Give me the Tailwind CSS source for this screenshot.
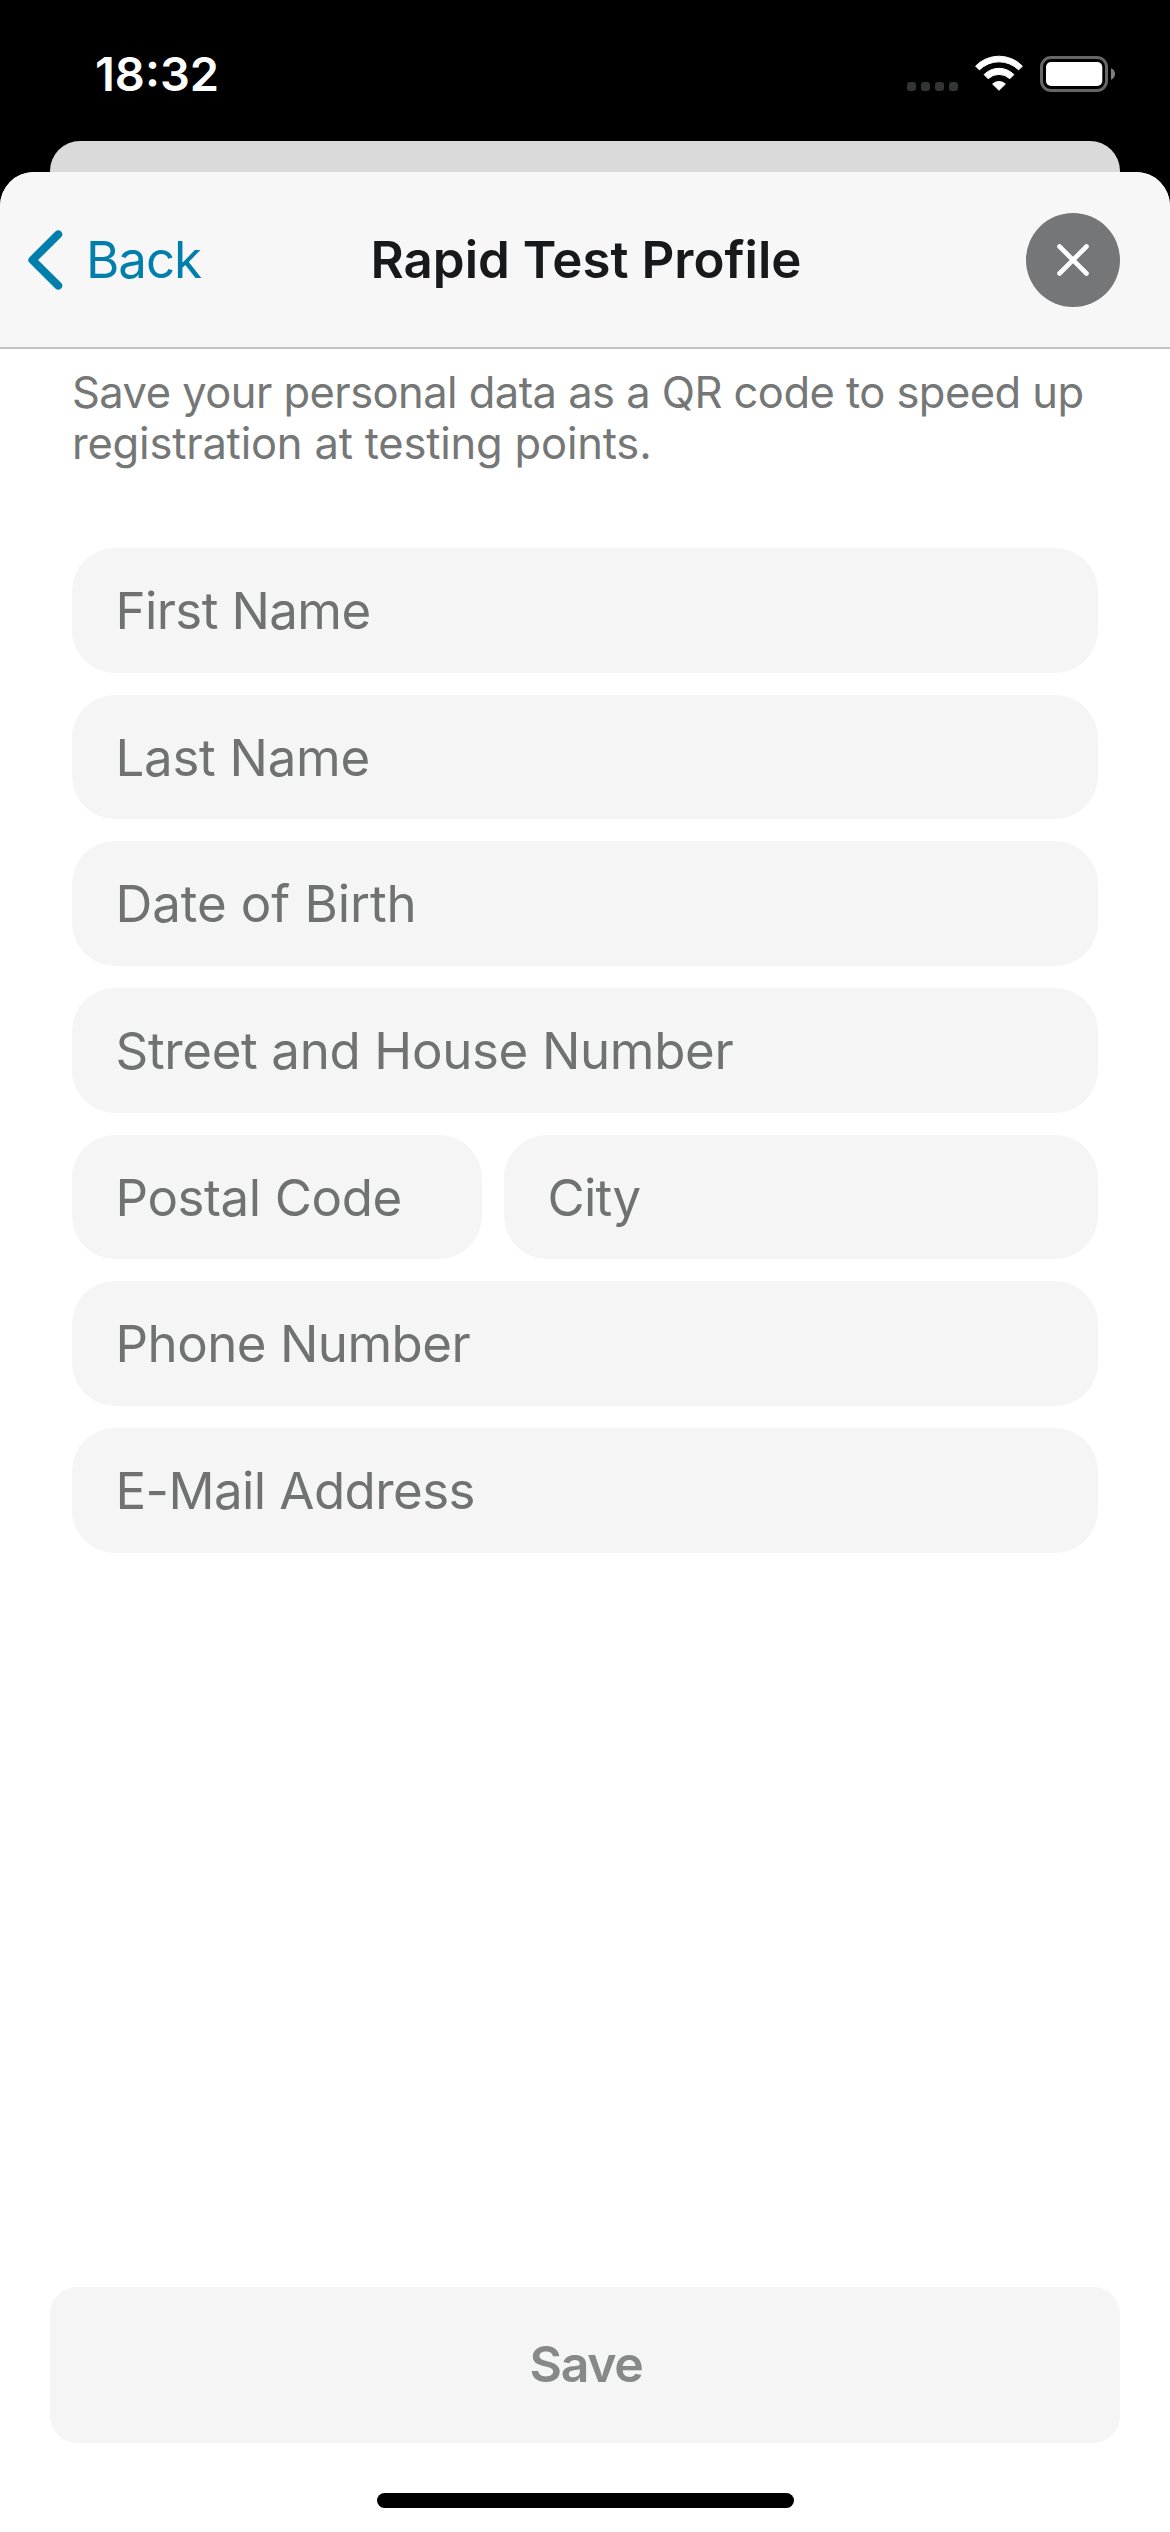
<!DOCTYPE html>
<html lang="en">
<head>
<meta charset="utf-8">
<title>Rapid Test Profile</title>
<script src="https://cdn.jsdelivr.net/npm/@tailwindcss/browser@4"></script>
</head>
<body class="bg-black font-['Inter',sans-serif]">
<div class="flex h-[2532px] w-[1170px] flex-col overflow-hidden bg-black">

  <!-- Status bar -->
  <div class="flex h-[141px] shrink-0 items-start justify-between pt-[44px] pr-[54px] pl-[95px] text-white">
    <span class="text-[47px] leading-[60px] font-semibold">18:32</span>
    <svg class="mt-2 h-[44px] w-[212px]" viewBox="904 52 212 44" fill="none">
      <g fill="#333434">
        <rect x="907" y="82" width="9" height="9" rx="3"/>
        <rect x="921" y="82" width="9" height="9" rx="3"/>
        <rect x="935" y="82" width="9" height="9" rx="3"/>
        <rect x="949" y="82" width="9" height="9" rx="3"/>
      </g>
      <g fill="#fff" stroke="#fff" stroke-width="1" stroke-linejoin="round">
        <path d="M975.6 66.1A32.6 32.6 0 0 1 1022.4 66.1L1018.6 69.9A27.8 27.8 0 0 0 979.4 69.9Z"/>
        <path d="M984.1 74.6A20.8 20.8 0 0 1 1013.9 74.6L1009.8 78.7A15.7 15.7 0 0 0 988.2 78.7Z"/>
        <path d="M992.6 84A9.6 9.6 0 0 1 1005.4 84L999 90.3Z"/>
      </g>
      <rect x="1041.5" y="57.5" width="65" height="33" rx="9.5" stroke="#666" stroke-width="3"/>
      <rect x="1046" y="62" width="56.3" height="24" rx="5" fill="#fff"/>
      <path d="M1111 68.2C1113.6 69.2 1115 71.5 1115 74S1113.6 78.800 1111 79.800Z" fill="#808080"/>
    </svg>
  </div>

  <!-- Edge of the screen behind the sheet -->
  <div class="mx-[50px] h-[31px] shrink-0 rounded-t-[30px] bg-[#dadada]"></div>

  <!-- Sheet -->
  <div class="flex flex-1 flex-col overflow-hidden rounded-t-[34px] bg-white">
    <header class="grid h-[177px] shrink-0 grid-cols-[1fr_auto_1fr] items-center border-b-2 border-[#c2c2c2] bg-[#f7f7f7] px-[26px]">
      <div class="flex items-center gap-[22px] text-[#007fad]">
        <svg class="h-[64px] w-[38px]" viewBox="26 228 38 64" fill="none" stroke="currentColor" stroke-width="8" stroke-linecap="round" stroke-linejoin="round"><path d="M58.200 234.400L32.400 260L58.200 285.600"/></svg>
        <span class="text-[51px] leading-[60px] tracking-[-1.05px]">Back</span>
      </div>
      <h1 class="pl-[2px] text-[51px] leading-[60px] font-semibold whitespace-nowrap text-[#17191a]">Rapid Test Profile</h1>
      <div class="mr-6 flex size-[94px] items-center justify-center justify-self-end rounded-full bg-[#757677]">
        <svg class="size-[32px]" viewBox="0 0 32 32" stroke="#fff" stroke-width="4.600" stroke-linecap="round"><path d="M2.500 2.500L29.500 29.500M29.500 2.500L2.500 29.500"/></svg>
      </div>
    </header>

    <main class="flex flex-1 flex-col">
      <p class="mt-[18px] ml-[72px] text-[43.5px] leading-[51.400px] whitespace-nowrap text-[#757777]"><span class="tracking-[-0.550px]">Save your personal data as a QR code to speed up</span><br><span class="tracking-[-0.200px]">registration at testing points.</span></p>

      <div class="mx-[72px] mt-[78.200px] flex flex-col gap-[22px] text-[51px] text-[#707272]">
        <div class="flex h-[124.670px] items-center rounded-[43px] bg-[#f5f5f5] pt-[2px] pl-[43.5px] tracking-[-0.600px]">First Name</div>
        <div class="flex h-[124.670px] items-center rounded-[43px] bg-[#f5f5f5] pt-[2px] pl-[43.5px] tracking-[-0.280px]">Last Name</div>
        <div class="flex h-[124.670px] items-center rounded-[43px] bg-[#f5f5f5] pt-[2px] pl-[43.5px] tracking-[-0.070px]">Date of Birth</div>
        <div class="flex h-[124.670px] items-center rounded-[43px] bg-[#f5f5f5] pt-[2px] pl-[43.5px] tracking-[-0.340px]">Street and House Number</div>
        <div class="flex gap-[22px]">
          <div class="flex h-[124.670px] w-[410px] items-center rounded-[43px] bg-[#f5f5f5] pt-[2px] pl-[43.5px] tracking-[-0.410px]">Postal Code</div>
          <div class="flex h-[124.670px] flex-1 items-center rounded-[43px] bg-[#f5f5f5] pt-[2px] pl-[43.5px] tracking-[-0.760px]">City</div>
        </div>
        <div class="flex h-[124.670px] items-center rounded-[43px] bg-[#f5f5f5] pt-[2px] pl-[43.5px] tracking-[-0.520px]">Phone Number</div>
        <div class="flex h-[124.670px] items-center rounded-[43px] bg-[#f5f5f5] pt-[2px] pl-[43.5px] tracking-[-0.580px]">E-Mail Address</div>
      </div>

      <div class="mt-auto flex flex-col items-center px-[50px] pb-6">
        <div class="flex h-[156px] w-full items-center justify-center rounded-[27px] bg-[#f5f5f5] pb-[2px] pl-[2px] text-[50px] font-semibold tracking-[-1.370px] text-[#878988]">Save</div>
        <div class="mt-[50px] h-[15px] w-[417px] rounded-full bg-black"></div>
      </div>
    </main>
  </div>
</div>
</body>
</html>
